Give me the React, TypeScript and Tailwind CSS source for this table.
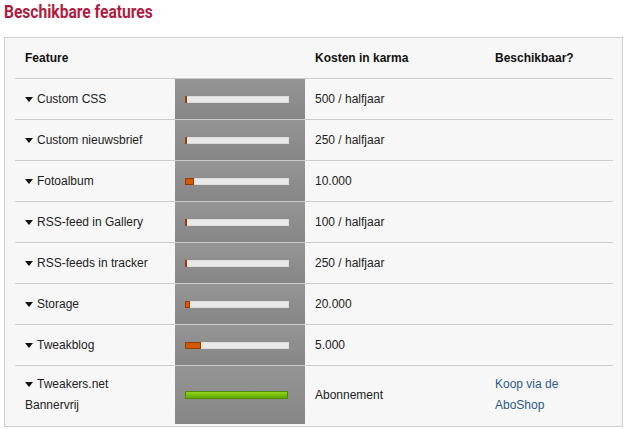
import React from "react";

type Row = { name: string[]; fill: number; cost: string; green?: boolean; link?: string[] };

const rows: Row[] = [
  { name: ["Custom CSS"], fill: 2, cost: "500 / halfjaar" },
  { name: ["Custom nieuwsbrief"], fill: 2, cost: "250 / halfjaar" },
  { name: ["Fotoalbum"], fill: 9, cost: "10.000" },
  { name: ["RSS-feed in Gallery"], fill: 2, cost: "100 / halfjaar" },
  { name: ["RSS-feeds in tracker"], fill: 2, cost: "250 / halfjaar" },
  { name: ["Storage"], fill: 5, cost: "20.000" },
  { name: ["Tweakblog"], fill: 16, cost: "5.000" },
  { name: ["Tweakers.net", "Bannervrij"], fill: 102, cost: "Abonnement", green: true, link: ["Koop via de", "AboShop"] },
];

function Bar({ fill, green }: { fill: number; green?: boolean }) {
  if (green) {
    return <div className="h-[8px] w-[103px] border border-[#4f8a00] bg-gradient-to-b from-[#8fd61a] to-[#5ea800]" />;
  }
  return (
    <div className="relative h-[7px] w-[104px] bg-[#e9e9e9] border border-[#dcdcdc]">
      <div className="absolute left-[-1px] top-[-1px] h-[7px] bg-[#d05a08] border border-[#9a3c00]" style={{ width: fill }} />
    </div>
  );
}

export default function App() {
  return (
    <div className="w-[627px] h-[429px] bg-white overflow-hidden text-[12px] text-[#222]" style={{ fontFamily: "Arial, 'Liberation Sans', sans-serif" }}>
      <div className="h-[37px] pl-[4px] pt-[1px]">
        <h1 className="inline-block origin-left scale-x-[0.82] text-[19px] leading-[22px] font-bold text-[#b01c3f] whitespace-nowrap" style={{ fontFamily: "Roboto, 'Liberation Sans', sans-serif" }}>
          Beschikbare features
        </h1>
      </div>
      <div className="ml-[4px] w-[619px] h-[390px] border border-[#cfcfcf] bg-[#f7f7f7] pl-[10px] pr-[9px]">
        <div className="flex h-[41px] items-center border-b border-[#cccccc] font-bold text-[#111]">
          <div className="w-[290px] pl-[10px]">Feature</div>
          <div className="w-[180px] pl-[10px]">Kosten in karma</div>
          <div className="pl-[10px]">Beschikbaar?</div>
        </div>
        {rows.map((r, i) => {
          const last = i === rows.length - 1;
          return (
            <div key={i} className={`flex ${last ? "h-[58px]" : "h-[41px] border-b border-[#cccccc]"}`}>
              <div className="w-[160px] pl-[10px] flex flex-col justify-center leading-[21px]">
                {r.name.map((n, j) => (
                  <div key={j} className="flex items-center">
                    {j === 0 && <span className="mr-[4px] w-0 h-0 border-l-[4px] border-r-[4px] border-t-[5px] border-l-transparent border-r-transparent border-t-[#111]" />}
                    <span>{n}</span>
                  </div>
                ))}
              </div>
              <div className="w-[130px] pl-[10px] flex items-center bg-gradient-to-b from-[#959595] to-[#868686]">
                <Bar fill={r.fill} green={r.green} />
              </div>
              <div className="w-[180px] pl-[10px] flex items-center">{r.cost}</div>
              <div className="pl-[10px] flex flex-col justify-center leading-[21px] text-[#2c5a87]">
                {r.link?.map((l, j) => <span key={j}>{l}</span>)}
              </div>
            </div>
          );
        })}
      </div>
    </div>
  );
}
